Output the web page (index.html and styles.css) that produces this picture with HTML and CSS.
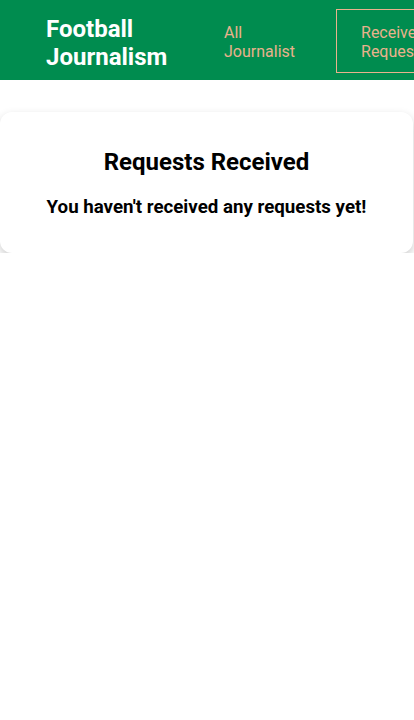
FILE: index.html
```html
<!DOCTYPE html>
<html lang="en">
<head>
<meta charset="utf-8">
<title>Football Journalism</title>
<link rel="stylesheet" href="styles.css">
</head>
<body>
<header class="topbar">
  <a class="brand" href="#">Football<br>Journalism</a>
  <nav class="nav">
    <a class="nav-link" href="#">All<br>Journalist</a>
    <a class="nav-link active" href="#">Received<br>Requests</a>
  </nav>
</header>
<main class="content">
  <section class="card">
    <h2 class="card-title">Requests Received</h2>
    <h3 class="card-text">You haven't received any requests yet!</h3>
  </section>
</main>
</body>
</html>
```
FILE: styles.css
```css
html, body {
  margin: 0;
  padding: 0;
  overflow: hidden;
}
body {
  font-family: Roboto, "Liberation Sans", sans-serif;
  background: #ffffff;
  color: #000;
  width: 414px;
}
.topbar {
  display: flex;
  align-items: center;
  height: 80px;
  background: #008c4f;
  padding-left: 46px;
  padding-top: 2px;
  box-sizing: border-box;
  white-space: nowrap;
}
.brand {
  color: #ffffff;
  font-weight: 700;
  font-size: 24px;
  line-height: 28px;
  text-decoration: none;
  width: 177px;
  padding-top: 4px;
  flex: none;
}
.nav {
  display: flex;
  align-items: center;
  gap: 16px;
  flex: none;
}
.nav-link {
  color: #e9b28d;
  font-size: 16px;
  line-height: 19px;
  text-decoration: none;
  padding: 13px 24px 11px;
  border: 1px solid transparent;
}
.nav-link:first-child {
  padding-left: 0;
}
.nav-link.active {
  border-color: #e9b28d;
}
.content {
  padding-top: 32px;
}
.card {
  width: 413px;
  box-sizing: border-box;
  background: #fff;
  border-radius: 12px;
  box-shadow: 0 4px 10px rgba(0, 0, 0, 0.2);
  padding: 36px 12px 35px;
  text-align: center;
}
.card-title {
  margin: 0;
  font-size: 24px;
  line-height: 28px;
  font-weight: 700;
}
.card-text {
  margin: 20px 0 0;
  font-size: 18.72px;
  line-height: 22px;
  font-weight: 700;
}
```
